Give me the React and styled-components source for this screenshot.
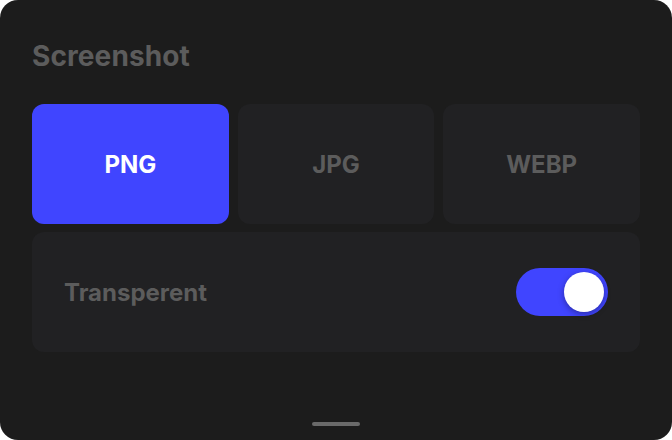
import React, { useState } from 'react';
import styled, { createGlobalStyle } from 'styled-components';

const GlobalStyle = createGlobalStyle`
  html, body {
    margin: 0;
    padding: 0;
    background: #ffffff;
  }
  body {
    font-family: Inter, "Liberation Sans", sans-serif;
  }
`;

const formats = ['PNG', 'JPG', 'WEBP'];

export default function App() {
  const [format, setFormat] = useState('PNG');
  const [transparent, setTransparent] = useState(true);

  return (
    <>
      <GlobalStyle />
      <Card>
        <Title>Screenshot</Title>
        <Formats>
          {formats.map((item) => (
            <FormatButton key={item} active={format === item} onClick={() => setFormat(item)}>
              {item}
            </FormatButton>
          ))}
        </Formats>
        <OptionRow>
          <OptionLabel>Transperent</OptionLabel>
          <Toggle on={transparent} onClick={() => setTransparent((v) => !v)}>
            <Knob on={transparent} />
          </Toggle>
        </OptionRow>
        <Handle />
      </Card>
    </>
  );
}

const Card = styled.div`
  width: 672px;
  height: 440px;
  box-sizing: border-box;
  background: #1c1c1c;
  border-radius: 18px;
  padding: 38px 32px 14px;
  display: flex;
  flex-direction: column;
  overflow: hidden;
`;

const Title = styled.h1`
  margin: 0 0 30px;
  font-size: 28px;
  line-height: 36px;
  font-weight: 700;
  color: #5c5c5c;
  letter-spacing: 0.1px;
`;

const Formats = styled.div`
  display: grid;
  grid-template-columns: repeat(3, 1fr);
  gap: 9px;
  height: 120px;
`;

const FormatButton = styled.button`
  border: none;
  border-radius: 12px;
  background: ${({ active }) => (active ? '#4045ff' : '#212123')};
  color: ${({ active }) => (active ? '#ffffff' : '#5c5c5c')};
  font-family: inherit;
  font-size: 24px;
  font-weight: 700;
  cursor: pointer;
  padding: 0;
`;

const OptionRow = styled.div`
  margin-top: 8px;
  height: 120px;
  border-radius: 12px;
  background: #212123;
  display: flex;
  align-items: center;
  justify-content: space-between;
  padding: 0 32px;
`;

const OptionLabel = styled.span`
  font-size: 24px;
  font-weight: 700;
  color: #5c5c5c;
`;

const Toggle = styled.div`
  width: 92px;
  height: 48px;
  border-radius: 24px;
  background: ${({ on }) => (on ? '#4045ff' : '#3a3a3c')};
  position: relative;
  cursor: pointer;
`;

const Knob = styled.div`
  position: absolute;
  top: 4px;
  left: ${({ on }) => (on ? '48px' : '4px')};
  width: 40px;
  height: 40px;
  border-radius: 50%;
  background: #ffffff;
  box-shadow: 0 2px 6px rgba(0, 0, 0, 0.35);
`;

const Handle = styled.div`
  margin: auto auto 0;
  width: 48px;
  height: 4px;
  border-radius: 2px;
  background: #6a6a6a;
`;
